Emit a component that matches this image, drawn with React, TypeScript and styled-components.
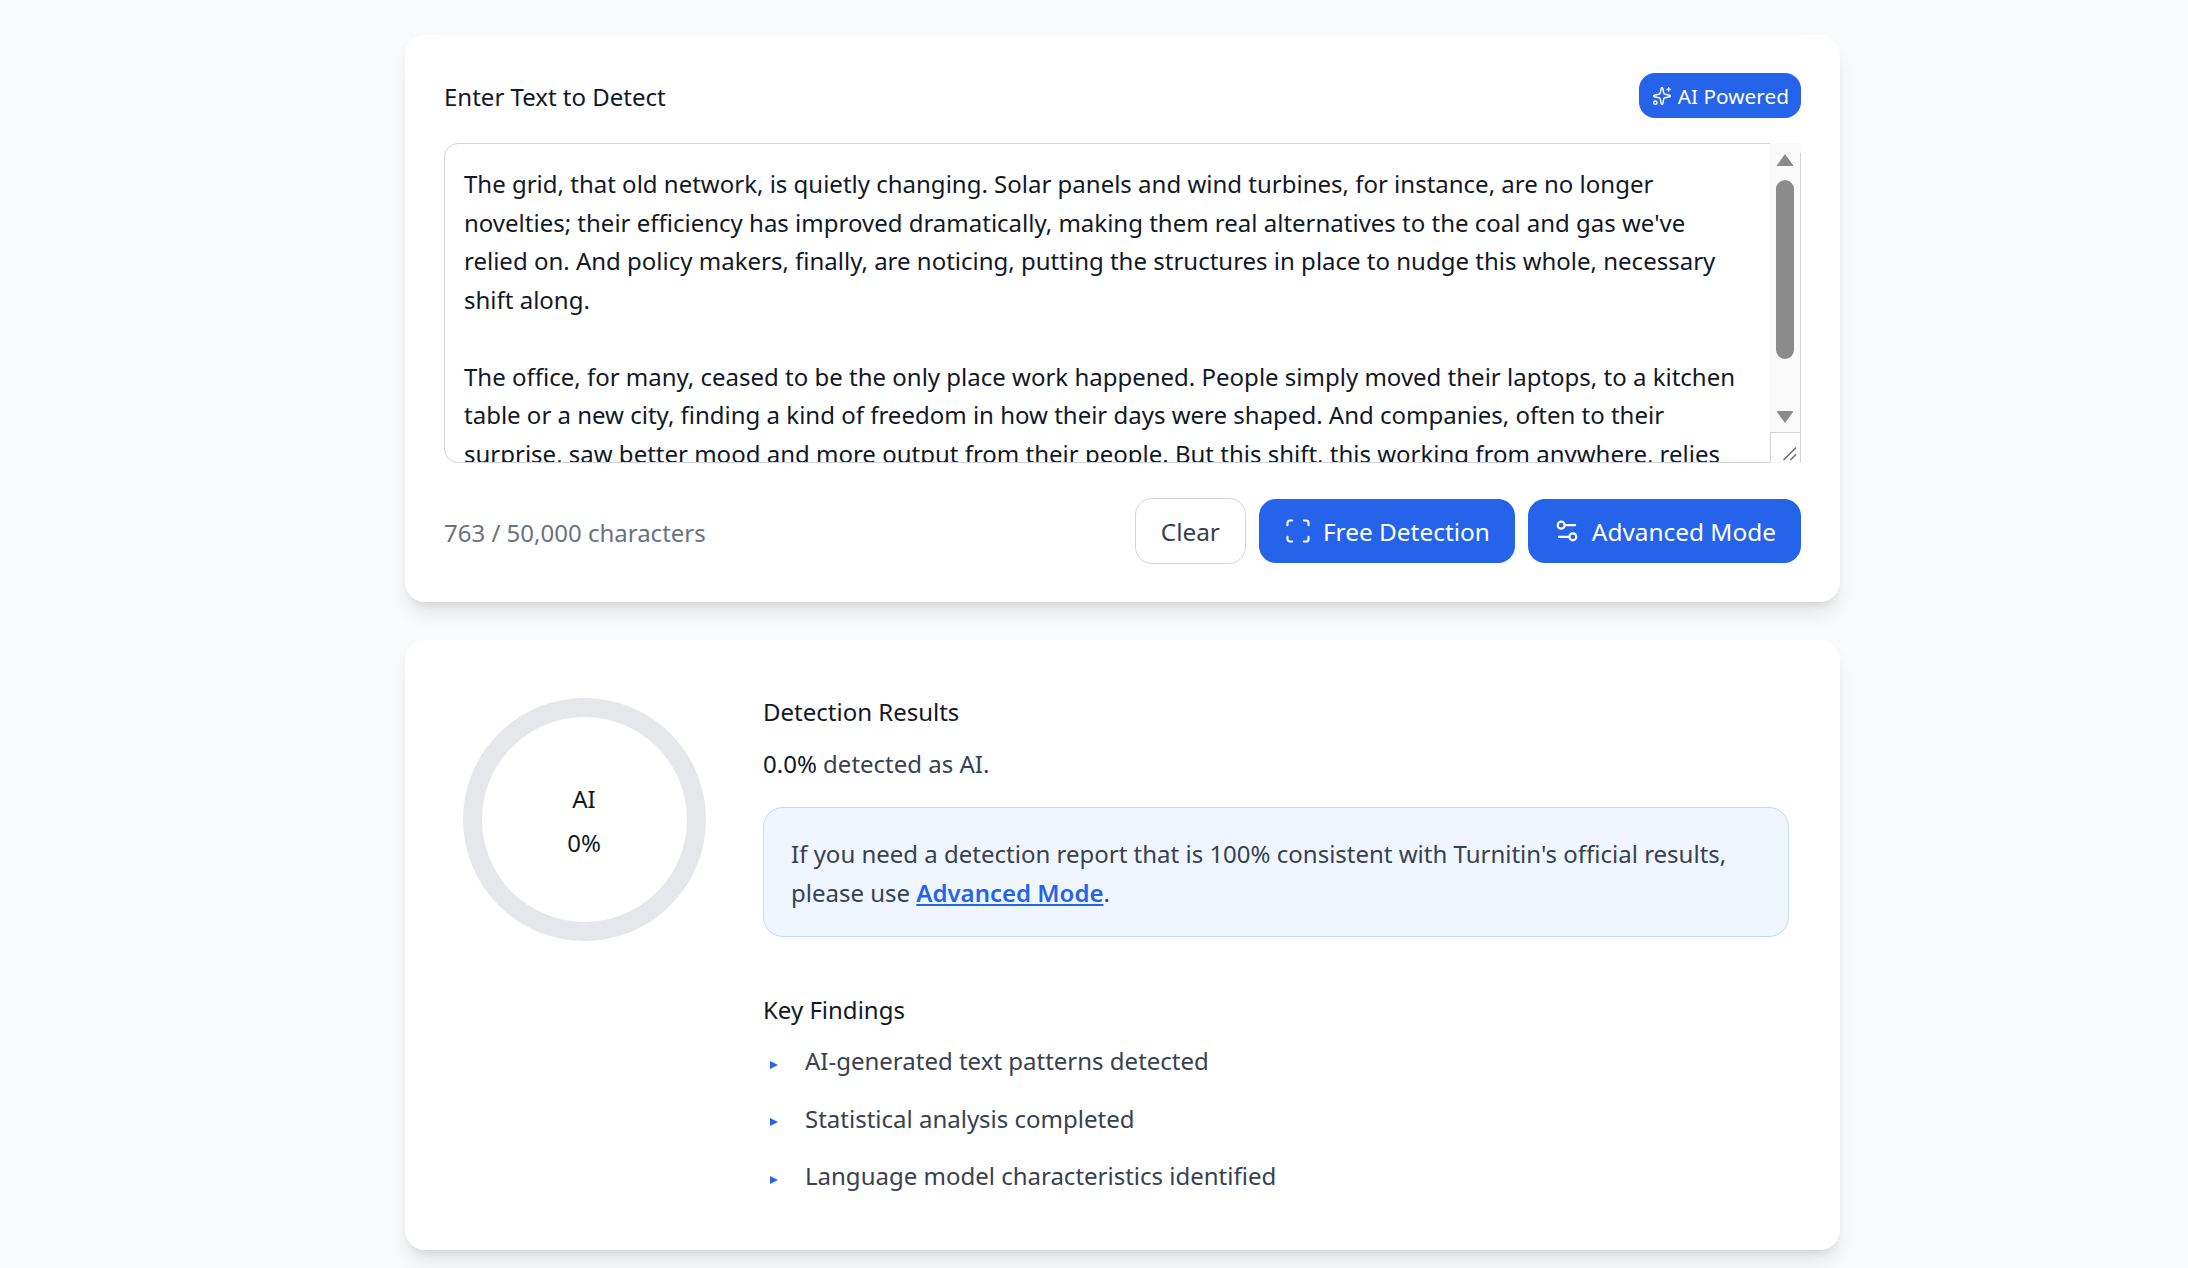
import React from "react";
import styled, { createGlobalStyle } from "styled-components";
import { Scan, Settings2, Sparkles } from "lucide-react";

const textLines = [
  "The grid, that old network, is quietly changing. Solar panels and wind turbines, for instance, are no longer",
  "novelties; their efficiency has improved dramatically, making them real alternatives to the coal and gas we've",
  "relied on. And policy makers, finally, are noticing, putting the structures in place to nudge this whole, necessary",
  "shift along.",
  "",
  "The office, for many, ceased to be the only place work happened. People simply moved their laptops, to a kitchen",
  "table or a new city, finding a kind of freedom in how their days were shaped. And companies, often to their",
  "surprise, saw better mood and more output from their people. But this shift, this working from anywhere, relies",
];

const findings = [
  "AI-generated text patterns detected",
  "Statistical analysis completed",
  "Language model characteristics identified",
];

const GlobalStyle = createGlobalStyle`
  html, body {
    margin: 0;
    height: 100%;
    overflow: hidden;
    background: #f9fafb;
  }

  body {
    font-family: "Noto Sans", "Open Sans", sans-serif;
    font-size: 24px;
    color: #111827;
  }

  * {
    box-sizing: border-box;
  }
`;

const Page = styled.main`
  display: flex;
  flex-direction: column;
  gap: 38px;
  width: 1435px;
  margin-left: 405px;
  padding-top: 35px;
`;

const Card = styled.section`
  background: #fff;
  border-radius: 20px;
  box-shadow: 0 14px 21px -4px rgba(0, 0, 0, 0.1),
    0 6px 8px -5px rgba(0, 0, 0, 0.1);
`;

const InputCard = styled(Card)`
  padding: 38px 39px 38px;
`;

const Header = styled.div`
  display: flex;
  align-items: center;
  justify-content: space-between;
  height: 45px;
  margin-bottom: 25px;
`;

const Label = styled.h2`
  margin: 0;
  padding-top: 2px;
  font-size: 24px;
  font-weight: 400;
  color: #111827;
`;

const Badge = styled.span`
  display: flex;
  align-items: center;
  gap: 6px;
  height: 45px;
  padding: 0 12px 0 13px;
  border-radius: 16px;
  background: #2563eb;
  color: #fff;
  font-size: 20.8px;
`;

const TextBox = styled.div`
  display: flex;
  height: 320px;
  border: 1.4px solid #d1d5db;
  border-radius: 14px;
`;

const TextClip = styled.div`
  flex: 1;
  overflow: hidden;
  padding: 21px 0 0 19px;
  font-size: 24px;
  line-height: 38.5px;
  color: #111827;
  border-radius: 14px 0 0 14px;
`;

const TextLine = styled.div`
  height: 38.5px;
  white-space: nowrap;
`;

const Rail = styled.div`
  display: flex;
  flex-direction: column;
  align-items: center;
  width: 31.4px;
  margin: -1.4px -1.4px -1.4px 0;
  background: linear-gradient(#fafafa 10px, #d1d5db 10px) right / 1.4px 100%
      no-repeat,
    #fafafa;
`;

const RailArrow = styled.svg<{ $gap: number }>`
  flex: none;
  margin-top: ${props => props.$gap}px;
  margin-right: 2px;
`;

const Thumb = styled.div`
  flex: none;
  width: 18px;
  height: 179px;
  margin: 13px 2px 0 0;
  border-radius: 9px;
  background: #8b8b8b;
`;

const ResizeCorner = styled.svg`
  flex: none;
  margin-top: 8px;
  margin-right: 1.4px;
  background: #fff;
  border-top: 1.4px solid #d4d4d4;
  border-left: 1.4px solid #d4d4d4;
`;

const Footer = styled.div`
  display: flex;
  align-items: center;
  justify-content: space-between;
  margin-top: 35px;
`;

const Counter = styled.span`
  padding-top: 2px;
  font-size: 24px;
  color: #6b7280;
`;

const Actions = styled.div`
  display: flex;
  align-items: center;
  gap: 13px;
`;

const Button = styled.button<{ $primary?: boolean }>`
  display: flex;
  align-items: center;
  justify-content: center;
  gap: 11px;
  height: ${props => (props.$primary ? "64px" : "66px")};
  padding: 0 25px;
  border: ${props => (props.$primary ? "none" : "1.4px solid #d1d5db")};
  border-radius: 17px;
  background: ${props => (props.$primary ? "#2563eb" : "#fff")};
  color: ${props => (props.$primary ? "#fff" : "#374151")};
  font-family: inherit;
  font-size: 24.4px;
`;

const ResultCard = styled(Card)`
  display: grid;
  grid-template-columns: 280px 1fr;
  column-gap: 39px;
  height: 610px;
  padding: 58px 51px 0 39px;
`;

const Ring = styled.div`
  display: flex;
  flex-direction: column;
  align-items: center;
  justify-content: center;
  gap: 14px;
  justify-self: center;
  width: 243px;
  height: 243px;
  padding-top: 3px;
  border: 19.5px solid #e5e7eb;
  border-radius: 50%;
  font-size: 24px;
  line-height: 30px;
  color: #111827;
`;

const Results = styled.div`
  margin-top: -3px;
`;

const Title = styled.h3`
  margin: 0;
  font-size: 24px;
  line-height: 34px;
  font-weight: 400;
  color: #111827;
`;

const Summary = styled.p`
  margin: 18px 0 0;
  line-height: 34px;
  font-size: 24px;
  color: #374151;
`;

const Strong = styled.span`
  color: #111827;
`;

const Notice = styled.div`
  height: 130px;
  margin: 26px 0 56px;
  padding: 27px 27px 0;
  background: #eff6ff;
  border: 1.4px solid #bfdbfe;
  border-radius: 20px;
  font-size: 24px;
  line-height: 38.5px;
  color: #374151;
`;

const NoticeLink = styled.a`
  color: #2563eb;
  font-weight: 600;
  text-decoration: underline;
`;

const FindingList = styled.ul`
  margin: 5px 0 0;
  padding: 0;
  list-style: none;
`;

const Finding = styled.li`
  display: flex;
  align-items: center;
  height: 57.5px;
  font-size: 24px;
  color: #374151;
`;

const Bullet = styled.span`
  width: 0;
  height: 0;
  margin: 8px 27px 0 7px;
  border-top: 4.5px solid transparent;
  border-bottom: 4.5px solid transparent;
  border-left: 8px solid #2563eb;
`;

const App: React.FC = () => {
  return (
    <>
      <GlobalStyle />
      <Page>
        <InputCard>
          <Header>
            <Label>Enter Text to Detect</Label>
            <Badge>
              <Sparkles size={20} strokeWidth={1.7} />
              AI Powered
            </Badge>
          </Header>
          <TextBox>
            <TextClip>
              {textLines.map((line, index) => (
                <TextLine key={index}>{line}</TextLine>
              ))}
            </TextClip>
            <Rail>
              <RailArrow $gap={10} width="18" height="14" viewBox="0 0 18 14">
                <path
                  d="M9 1 L17 12 Q17.5 13 16 13 L2 13 Q0.5 13 1 12 Z"
                  fill="#8b8b8b"
                />
              </RailArrow>
              <Thumb />
              <RailArrow $gap={51} width="18" height="14" viewBox="0 0 18 14">
                <path
                  d="M9 13 L17 2 Q17.5 1 16 1 L2 1 Q0.5 1 1 2 Z"
                  fill="#8b8b8b"
                />
              </RailArrow>
              <ResizeCorner width="30" height="30" viewBox="0 0 30 30">
                <path
                  d="M13 28 L26 15 M20 28 L26 22"
                  stroke="#6f6f6f"
                  strokeWidth="1.6"
                  fill="none"
                />
              </ResizeCorner>
            </Rail>
          </TextBox>
          <Footer>
            <Counter>763 / 50,000 characters</Counter>
            <Actions>
              <Button>Clear</Button>
              <Button $primary>
                <Scan size={28} strokeWidth={1.8} />
                Free Detection
              </Button>
              <Button $primary>
                <Settings2 size={28} strokeWidth={1.8} />
                Advanced Mode
              </Button>
            </Actions>
          </Footer>
        </InputCard>

        <ResultCard>
          <Ring>
            <span>AI</span>
            <span>0%</span>
          </Ring>
          <Results>
            <Title>Detection Results</Title>
            <Summary>
              <Strong>0.0%</Strong> detected as AI.
            </Summary>
            <Notice>
              If you need a detection report that is 100% consistent with
              Turnitin's official results,
              <br />
              please use <NoticeLink href="#">Advanced Mode</NoticeLink>.
            </Notice>
            <Title>Key Findings</Title>
            <FindingList>
              {findings.map(item => (
                <Finding key={item}>
                  <Bullet />
                  {item}
                </Finding>
              ))}
            </FindingList>
          </Results>
        </ResultCard>
      </Page>
    </>
  );
};

export default App;
